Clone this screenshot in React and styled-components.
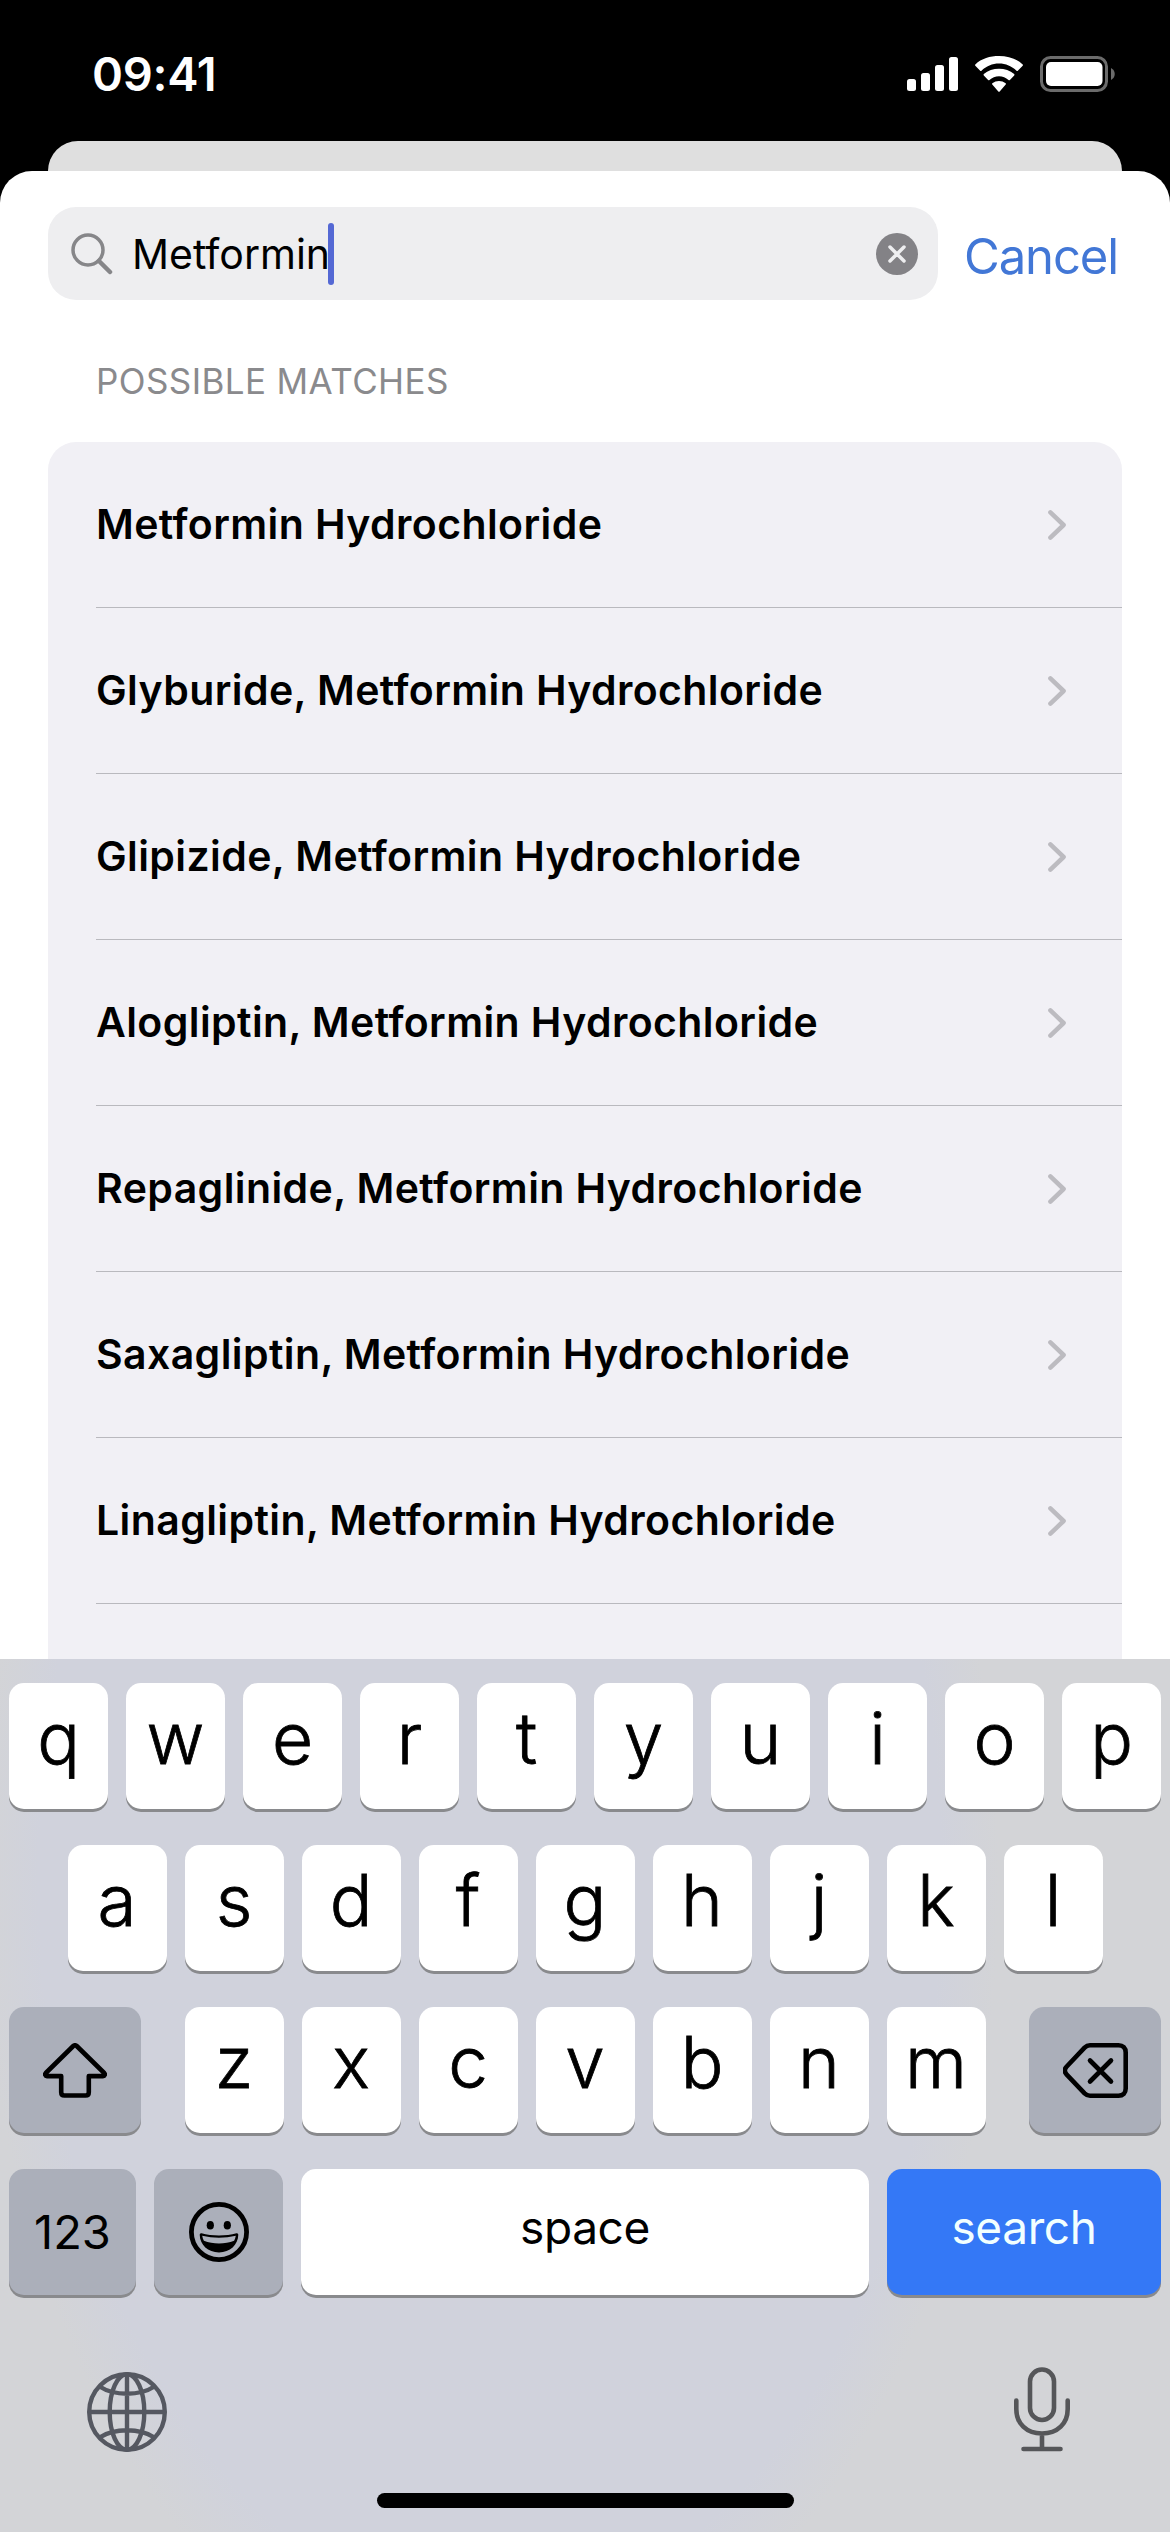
import React from "react";
import styled, { createGlobalStyle } from "styled-components";

const matches = [
  "Metformin Hydrochloride",
  "Glyburide, Metformin Hydrochloride",
  "Glipizide, Metformin Hydrochloride",
  "Alogliptin, Metformin Hydrochloride",
  "Repaglinide, Metformin Hydrochloride",
  "Saxagliptin, Metformin Hydrochloride",
  "Linagliptin, Metformin Hydrochloride",
];

const SignalIcon = () => (
  <svg width="51" height="34" viewBox="0 0 51 34" fill="#fff">
    <rect x="0" y="22" width="9" height="12" rx="2.5" />
    <rect x="14" y="16" width="9" height="18" rx="2.5" />
    <rect x="28" y="8" width="9" height="26" rx="2.5" />
    <rect x="42" y="0" width="9" height="34" rx="2.5" />
  </svg>
);

const WifiIcon = () => (
  <svg width="48" height="36" viewBox="0 0 48 36" fill="#fff">
    <path d="M24 7.6c6.7 0 12.900 2.600 17.500 7.200.4.400 1 .4 1.300 0l4.900-5c.4-.4.4-1 0-1.400C41.400 2.500 33 0 24 0S6.600 2.500.3 8.400c-.4.400-.4 1 0 1.400l4.900 5c.3.400.9.400 1.300 0C11.100 10.200 17.300 7.600 24 7.600z" />
    <path d="M24 20.200c3.600 0 7 1.400 9.500 3.700.4.400 1 .4 1.400 0l4.300-4.500c.4-.4.4-1 0-1.400-4.100-3.400-9.500-5.300-15.200-5.300s-11.100 1.900-15.200 5.300c-.4.400-.4 1 0 1.400l4.300 4.500c.4.400 1 .4 1.400 0 2.500-2.300 5.900-3.700 9.500-3.700z" />
    <path d="M30.700 28.600c.4-.4.400-1 0-1.400a11 11 0 0 0-13.400 0c-.4.400-.4 1 0 1.400l6 6.800c.4.400 1 .4 1.400 0z" />
  </svg>
);

const BatteryIcon = () => (
  <svg width="75" height="36" viewBox="0 0 75 36">
    <rect x="1.500" y="1.500" width="65" height="33" rx="9" fill="none" stroke="#6b6b6b" strokeWidth="3" />
    <rect x="6" y="6" width="56.500" height="24" rx="5" fill="#fff" />
    <path d="M71 12c5 2.500 5 9.500 0 12z" fill="#6b6b6b" />
  </svg>
);

const SearchIcon = () => (
  <svg width="42" height="42" viewBox="0 0 42 42" fill="none" stroke="#868689" strokeLinecap="round">
    <circle cx="17" cy="17" r="15" strokeWidth="3.500" />
    <path d="M28 28l11 11" strokeWidth="4.500" />
  </svg>
);

const ClearIcon = () => (
  <svg width="42" height="42" viewBox="0 0 42 42">
    <circle cx="21" cy="21" r="21" fill="#838286" />
    <path d="M14 14l14 14M28 14L14 28" stroke="#eeeef0" strokeWidth="3.500" strokeLinecap="round" />
  </svg>
);

const Chevron = () => (
  <svg width="18" height="30" viewBox="0 0 18 30" fill="none">
    <path d="M2.400 2.400L15.600 15 2.400 27.600" stroke="#bcbbc0" strokeWidth="4.500" strokeLinecap="round" strokeLinejoin="round" />
  </svg>
);

const ShiftIcon = () => (
  <svg width="64" height="55" viewBox="0 0 64 55" fill="none">
    <path
      d="M30.300 3L2.800 30c-1.200 1.300-.6 3.100 1.200 3.100h14.200v16.200c0 2 1.200 3.200 3.200 3.200h21.200c2 0 3.200-1.200 3.200-3.200V33.100H60c1.800 0 2.400-1.800 1.200-3.100L33.700 3c-1-1-2.400-1-3.400 0z"
      stroke="#000"
      strokeWidth="4.600"
      strokeLinejoin="round"
    />
  </svg>
);

const BackspaceIcon = () => (
  <svg width="65" height="55" viewBox="0 0 65 55" fill="none" stroke="#000" strokeLinecap="round" strokeLinejoin="round">
    <path
      d="M27 2.300h28.500c4.500 0 7.200 2.700 7.200 7.200v36c0 4.500-2.700 7.200-7.200 7.200H27c-2.200 0-3.900-.8-5.400-2.300L3.500 31.300c-2.300-2.500-2.300-5.100 0-7.600L21.600 4.600C23.100 3.100 24.800 2.300 27 2.300z"
      strokeWidth="4.600"
    />
    <path d="M27 17.500l21 21M48 17.500l-21 21" strokeWidth="4.600" />
  </svg>
);

const EmojiIcon = () => (
  <svg width="60" height="60" viewBox="0 0 60 60">
    <circle cx="30" cy="30" r="27.600" fill="none" stroke="#000" strokeWidth="4.800" />
    <ellipse cx="21.300" cy="23.300" rx="3.600" ry="4.300" />
    <ellipse cx="38.300" cy="23.300" rx="3.600" ry="4.300" />
    <path d="M12.500 31.300C23 34.200 37 34.200 47.500 31.300q1.800-.3 1.800 1.500C49 43 41 50.500 30 50.500S11 43 10.700 32.800q0-1.800 1.800-1.500z" />
    <path d="M13.200 33.800C24 36.400 36 36.400 46.800 33.800c-.3 2-.9 3.600-1.700 5C36 42.400 24 42.400 14.900 38.800c-.8-1.400-1.400-3-1.700-5z" fill="#abafba" />
  </svg>
);

const GlobeIcon = () => (
  <svg width="80" height="80" viewBox="0 0 80 80" fill="none" stroke="#555861" strokeWidth="4.400">
    <circle cx="40" cy="40" r="37.800" />
    <ellipse cx="40" cy="40" rx="17.300" ry="37.800" />
    <path d="M40 2v76M2 40h76M12.500 14.500c15 9.600 40 9.600 55 0M12.500 65.500c15-9.600 40-9.600 55 0" />
  </svg>
);

const MicIcon = () => (
  <svg width="56" height="85" viewBox="0 0 56 85" fill="none" stroke="#555659" strokeWidth="4.600" strokeLinecap="round">
    <rect x="16" y="2.500" width="24" height="50.500" rx="12" />
    <path d="M2.300 33.500V42c0 14.500 10 24.500 25.700 24.500S53.700 56.500 53.700 42v-8.500M28 66.500V82M9.500 82h37" />
  </svg>
);

const App = () => {
  return (
    <Phone>
      <GlobalStyle />
      <StatusBar>
        <Time>09:41</Time>
        <StatusIcons>
          <SignalIcon />
          <WifiIcon />
          <BatteryIcon />
        </StatusIcons>
      </StatusBar>
      <BackSheet />
      <Sheet>
        <SearchRow>
          <SearchField>
            <SearchIcon />
            <Query>Metformin</Query>
            <Caret />
            <ClearIcon />
          </SearchField>
          <Cancel>Cancel</Cancel>
        </SearchRow>
        <SectionTitle>POSSIBLE MATCHES</SectionTitle>
        <List>
          {matches.map((name) => (
            <Row key={name}>
              <RowName>{name}</RowName>
              <Chevron />
            </Row>
          ))}
        </List>
      </Sheet>
      <Keyboard>
        <KeyRow>
          {"qwertyuiop".split("").map((letter) => (
            <Key key={letter}>{letter}</Key>
          ))}
        </KeyRow>
        <KeyRow>
          {"asdfghjkl".split("").map((letter) => (
            <Key key={letter}>{letter}</Key>
          ))}
        </KeyRow>
        <KeyRow $spread>
          <ActionKey $width={132}>
            <ShiftIcon />
          </ActionKey>
          <LetterGroup>
            {"zxcvbnm".split("").map((letter) => (
              <Key key={letter}>{letter}</Key>
            ))}
          </LetterGroup>
          <ActionKey $width={132}>
            <BackspaceIcon />
          </ActionKey>
        </KeyRow>
        <KeyRow $spread>
          <ActionKey $width={127}>
            <NumberLabel>123</NumberLabel>
          </ActionKey>
          <ActionKey $width={129}>
            <EmojiIcon />
          </ActionKey>
          <ActionKey $width={568} $bg="#fff">
            <KeyLabel>space</KeyLabel>
          </ActionKey>
          <ActionKey $width={274} $bg="#3478f6" $color="#f2ffff">
            <KeyLabel>search</KeyLabel>
          </ActionKey>
        </KeyRow>
        <BottomBar>
          <GlobeIcon />
          <MicIcon />
        </BottomBar>
        <HomeIndicator />
      </Keyboard>
    </Phone>
  );
};

export default App;

const GlobalStyle = createGlobalStyle`
  * {
    box-sizing: border-box;
  }
  body {
    margin: 0;
    background: #000;
    font-family: Inter, "Liberation Sans", sans-serif;
    font-variant-ligatures: none;
  }
  svg {
    display: block;
    flex-shrink: 0;
  }
`;

const Phone = styled.div`
  display: flex;
  flex-direction: column;
  width: 1170px;
  height: 2532px;
  background: #000;
  overflow: hidden;
`;

const StatusBar = styled.header`
  display: flex;
  align-items: center;
  justify-content: space-between;
  height: 141px;
  padding: 7px 55px 0 92px;
`;

const Time = styled.div`
  color: #fff;
  font-size: 47px;
  font-weight: 600;
  letter-spacing: -0.3px;
  line-height: 56px;
`;

const StatusIcons = styled.div`
  display: flex;
  align-items: center;
  gap: 17px;
`;

const BackSheet = styled.div`
  height: 60px;
  margin: 0 48px -30px;
  border-radius: 30px 30px 0 0;
  background: #dfdfdf;
`;

const Sheet = styled.main`
  flex: 1;
  min-height: 0;
  padding: 36px 48px 0;
  border-radius: 32px 32px 0 0;
  background: #fff;
  overflow: hidden;
`;

const SearchRow = styled.div`
  display: flex;
  align-items: center;
  gap: 26px;
`;

const SearchField = styled.div`
  display: flex;
  flex-shrink: 0;
  align-items: center;
  width: 890px;
  height: 93px;
  padding: 0 20px 0 23px;
  border-radius: 28px;
  background: #eeeef0;

  svg:last-child {
    margin-left: auto;
  }
`;

const Query = styled.span`
  margin-left: 19px;
  color: #000;
  font-size: 41px;
  line-height: 50px;
`;

const Caret = styled.span`
  width: 6px;
  height: 62px;
  margin-left: -2px;
  border-radius: 3px;
  background: #5468d4;
`;

const Cancel = styled.span`
  padding-top: 6px;
  color: #4277d6;
  font-size: 49px;
  letter-spacing: -1.1px;
  line-height: 60px;
`;

const SectionTitle = styled.h2`
  margin: 59px 0 0 48px;
  color: #8a8a8d;
  font-size: 35px;
  font-weight: 400;
  letter-spacing: 0.4px;
  line-height: 44px;
`;

const List = styled.div`
  height: 1300px;
  margin-top: 39px;
  border-radius: 28px;
  background: #f1f0f5;
`;

const Row = styled.div`
  display: flex;
  align-items: center;
  justify-content: space-between;
  height: 166px;
  margin-left: 48px;
  padding-right: 56px;
  border-bottom: 1px solid #b9b9be;
`;

const RowName = styled.span`
  padding-bottom: 2px;
  color: #000;
  font-size: 41px;
  font-weight: 600;
  letter-spacing: 0.4px;
  line-height: 50px;
  white-space: nowrap;
`;

const Keyboard = styled.section`
  display: flex;
  flex-direction: column;
  align-items: center;
  height: 873px;
  padding: 24px 9px 0;
  background: radial-gradient(480px 780px at 490px 220px, #d0d2dc 94%, #d3d4d7 106%);
`;

const KeyRow = styled.div`
  display: flex;
  justify-content: ${(props) => (props.$spread ? "space-between" : "center")};
  gap: ${(props) => (props.$spread ? 0 : 18)}px;
  width: 100%;
  margin-bottom: 36px;
`;

const LetterGroup = styled.div`
  display: flex;
  gap: 18px;
`;

const Key = styled.div`
  width: 99px;
  height: 126px;
  border-radius: 15px;
  background: #fff;
  box-shadow: 0 3px 0 #898a8d;
  color: #000;
  font-size: 71px;
  font-weight: 300;
  -webkit-text-stroke: 0.8px #000;
  line-height: 110px;
  text-align: center;
`;

const ActionKey = styled.div`
  display: flex;
  align-items: center;
  justify-content: center;
  width: ${(props) => props.$width}px;
  height: 126px;
  border-radius: 15px;
  background: ${(props) => props.$bg || "#abafba"};
  box-shadow: 0 3px 0 #898a8d;
  color: ${(props) => props.$color || "#000"};
`;

const KeyLabel = styled.span`
  padding-bottom: 10px;
  font-size: 46px;
  letter-spacing: -0.4px;
  line-height: 56px;
`;

const NumberLabel = styled(KeyLabel)`
  padding-bottom: 1px;
  font-size: 47px;
  letter-spacing: 0;
`;

const BottomBar = styled.div`
  display: flex;
  align-items: flex-end;
  justify-content: space-between;
  width: 100%;
  height: 90px;
  margin-top: 31px;
  padding: 0 91px 0 78px;
`;

const HomeIndicator = styled.div`
  width: 417px;
  height: 15px;
  margin-top: 41px;
  border-radius: 8px;
  background: #000;
`;
